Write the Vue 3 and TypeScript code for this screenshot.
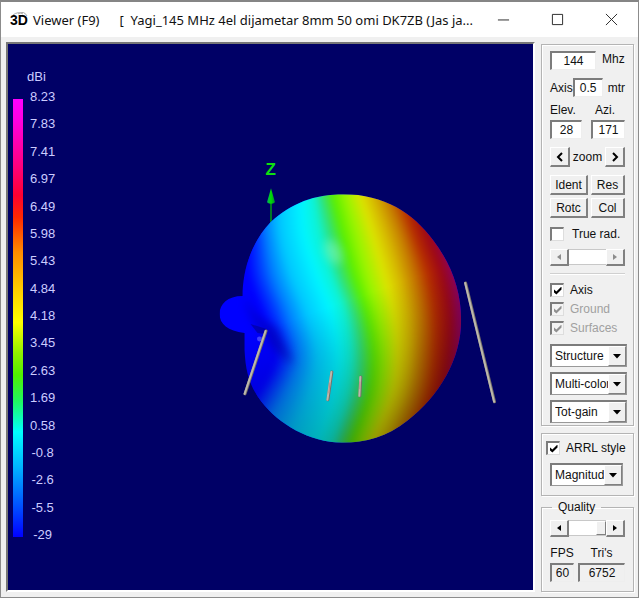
<script setup lang="ts">
import { ref } from 'vue'

type Rgb = [number, number, number]
interface Isoline {
  color: Rgb
  xs: number[]
}

const gains = ['8.23', '7.83', '7.41', '6.97', '6.49', '5.98', '5.43', '4.84', '4.18', '3.45', '2.63', '1.69', '0.58', '-0.8', '-2.6', '-5.5', '-29']

const levels = [195, 235, 275, 315, 355, 395, 442]

// x position of each colour along the levels above
const isolines: Isoline[] = [
  { color: [0, 0, 255], xs: [240, 246, 248, 262, 276, 257, 225] },
  { color: [0, 60, 255], xs: [252, 257, 261, 276, 287, 270, 238] },
  { color: [0, 130, 255], xs: [264, 267, 274, 289, 299, 285, 256] },
  { color: [0, 200, 255], xs: [279, 281, 291, 307, 316, 308, 288] },
  { color: [0, 245, 255], xs: [301, 304, 316, 331, 338, 333, 318] },
  { color: [15, 242, 210], xs: [314, 320, 331, 345, 351, 347, 333] },
  { color: [50, 225, 120], xs: [322, 331, 341, 355, 361, 357, 341] },
  { color: [90, 238, 0], xs: [333, 343, 354, 367, 373, 369, 352] },
  { color: [150, 245, 0], xs: [345, 356, 366, 378, 384, 379, 361] },
  { color: [220, 228, 0], xs: [360, 373, 384, 394, 397, 392, 373] },
  { color: [214, 185, 0], xs: [372, 386, 398, 407, 409, 403, 385] },
  { color: [198, 125, 0], xs: [386, 401, 412, 420, 420, 414, 397] },
  { color: [182, 45, 0], xs: [401, 415, 428, 435, 435, 429, 413] },
  { color: [158, 8, 22], xs: [414, 428, 442, 449, 448, 441, 425] },
  { color: [135, 0, 115], xs: [432, 446, 458, 463, 463, 454, 440] },
]

function mix(a: number, b: number, t: number): number {
  return a + (b - a) * t
}

// Smooth curve through the level points, closed off on the right
function regionPath(xs: number[]): string {
  let d = `M${xs[0]} 175 L${xs[0]} ${levels[0]}`
  for (let i = 0; i < xs.length - 1; i++) {
    const before = Math.max(i - 1, 0)
    const after = Math.min(i + 2, xs.length - 1)
    const c1x = xs[i] + (xs[i + 1] - xs[before]) / 6
    const c2x = xs[i + 1] - (xs[after] - xs[i]) / 6
    const c1y = levels[i] + (levels[i + 1] - levels[before]) / 6
    const c2y = levels[i + 1] - (levels[after] - levels[i]) / 6
    d += ` C${c1x} ${c1y} ${c2x} ${c2y} ${xs[i + 1]} ${levels[i + 1]}`
  }
  return d + ' V460 H490 V175 Z'
}

const steps = 8
const regions: { d: string; fill: string }[] = []
for (let i = 0; i < isolines.length - 1; i++) {
  const a = isolines[i]
  const b = isolines[i + 1]
  for (let s = 0; s < steps; s++) {
    const t = s / steps
    const rgb = a.color.map((c, k) => Math.round(mix(c, b.color[k], t)))
    regions.push({
      d: regionPath(a.xs.map((x, k) => mix(x, b.xs[k], t))),
      fill: `rgb(${rgb.join(',')})`,
    })
  }
}

const lobe =
  'M344 194 C385 194 414 213 434 240 C452 264 462 290 462 320 C462 360 440 396 408 421 C388 437 366 443 343 443 C310 443 279 424 262 402 C250 386 246 372 245 350 L245 333 C228 331 220 324 220 314 C220 304 228 296 243 296 C243 270 252 242 271 222 C292 203 315 194 344 194 Z'

const frequency = ref('144')
const axisLength = ref('0.5')
const elevation = ref('28')
const azimuth = ref('171')
const trueRad = ref(false)
const showAxis = ref(true)
const arrl = ref(true)
const structure = ref('Structure')
const palette = ref('Multi-color')
const gainKind = ref('Tot-gain')
const scale = ref('Magnitude')
const quality = ref(100)
const selects = [
  { label: 'Structure view', model: structure },
  { label: 'Colouring', model: palette },
  { label: 'Gain type', model: gainKind },
]
</script>

<template>
  <main class="window">
    <header class="titlebar">
      <svg class="logo" viewBox="0 0 20 20" aria-hidden="true">
        <path d="M3 5 Q8 1 13 4 M8 4 Q14 0 17 6" fill="none" stroke="#aaa" stroke-width="1" />
        <text x="0" y="15">3D</text>
      </svg>
      <h1 class="title"><span>Viewer (F9)</span><span>[&nbsp; Yagi_145 MHz 4el dijametar 8mm 50 omi DK7ZB (Jas ja...</span></h1>
      <nav class="controls">
        <button type="button" aria-label="Minimize"><svg viewBox="0 0 14 14"><path d="M1 7.500H13" /></svg></button>
        <button type="button" aria-label="Maximize"><svg viewBox="0 0 14 14"><path d="M1.500 1.500H12.500V12.500H1.500Z" /></svg></button>
        <button type="button" aria-label="Close"><svg viewBox="0 0 14 14"><path d="M1 1L13 13M13 1L1 13" /></svg></button>
      </nav>
    </header>

    <div class="body">
      <section class="viewport">
        <svg class="scene" viewBox="8 44 526 546" preserveAspectRatio="xMidYMid meet" role="img" aria-label="Radiation pattern">
          <defs>
            <clipPath id="lobe-clip"><path :d="lobe" /></clipPath>
            <filter id="soft" x="-50%" y="-50%" width="200%" height="200%"><feGaussianBlur stdDeviation="5" /></filter>
            <filter id="blend" x="-10%" y="-10%" width="120%" height="120%" color-interpolation-filters="sRGB"><feGaussianBlur stdDeviation="3" /></filter>
            <linearGradient id="shade" gradientUnits="userSpaceOnUse" x1="305" y1="315" x2="350" y2="445">
              <stop offset="0" stop-color="#000" stop-opacity="0" />
              <stop offset="1" stop-color="#000" stop-opacity="0.3" />
            </linearGradient>
            <linearGradient id="arrow" x1="0" x2="1">
              <stop offset="0" stop-color="#0a6" />
              <stop offset="0.5" stop-color="#0d0" />
              <stop offset="1" stop-color="#083" />
            </linearGradient>
          </defs>
          <text class="axis-name" x="266" y="175">Z</text>
          <path d="M271.500 200V225" stroke="#00a010" stroke-width="1.500" />
          <path d="M271.500 188L275.500 202Q271.500 205 267.500 202Z" fill="url(#arrow)" />
          <g clip-path="url(#lobe-clip)">
            <rect x="215" y="185" width="260" height="265" fill="#0000ff" />
            <g filter="url(#blend)">
              <path v-for="(region, i) in regions" :key="i" :d="region.d" :fill="region.fill" />
            </g>
            <path d="M245 295Q257 322 276 326Q284 345 294 364Q273 352 264 332Q250 322 245 295Z" fill="#0000b0" opacity="0.65" filter="url(#soft)" />
            <ellipse cx="334" cy="252" rx="8" ry="13" fill="#a0ffd0" opacity="0.4" filter="url(#soft)" transform="rotate(-25 334 252)" />
            <rect x="215" y="185" width="260" height="265" fill="url(#shade)" />
            <path d="M251 324L267 329L265 334L258 333Z" fill="#000080" opacity="0.5" />
            <circle cx="260" cy="339" r="2.500" fill="#4040ff" />
          </g>
          <g fill="none" stroke-linecap="round">
            <path d="M266.500 331L245.500 394M466.500 283L495.500 402M332.500 372L328.500 400M361.500 377L360.500 396" stroke="#777068" stroke-width="3" />
            <path d="M266 331L245 394M466 283L495 402M332 372L328 400M361 377L360 396" stroke="#bcb8ac" stroke-width="2" />
            <path d="M330.500 383L329.500 393M360.500 382V389" stroke="#bd8a86" stroke-width="1" />
          </g>
        </svg>
        <div class="legend">
          <span class="unit">dBi</span>
          <div class="scale">
            <div class="bar"></div>
            <ol class="gains">
              <li v-for="gain in gains" :key="gain">{{ gain }}</li>
            </ol>
          </div>
        </div>
      </section>

      <aside class="sidebar">
        <section class="group main">
          <label class="row freq"><input v-model="frequency" class="field f46" type="text" /><span>Mhz</span></label>
          <label class="row axis"><span>Axis</span><input v-model="axisLength" class="field f32" type="text" /><span class="mtr">mtr</span></label>
          <div class="angles">
            <label><span>Elev.</span><input v-model="elevation" class="field" type="text" /></label>
            <label><span>Azi.</span><input v-model="azimuth" class="field" type="text" /></label>
          </div>
          <div class="row zoom">
            <button class="btn square" type="button" aria-label="Zoom out"><svg viewBox="0 0 10 10"><path d="M7 1L3 5L7 9" /></svg></button>
            <span>zoom</span>
            <button class="btn square" type="button" aria-label="Zoom in"><svg viewBox="0 0 10 10"><path d="M3 1L7 5L3 9" /></svg></button>
          </div>
          <div class="actions">
            <button class="btn" type="button">Ident</button>
            <button class="btn" type="button">Res</button>
            <button class="btn" type="button">Rotc</button>
            <button class="btn" type="button">Col</button>
          </div>
          <label class="check rad"><input v-model="trueRad" type="checkbox" />True rad.</label>
          <div class="scroller off">
            <button class="btn" type="button" disabled aria-label="Decrease radius"><i class="tri left"></i></button>
            <input type="range" disabled aria-label="Radius" />
            <button class="btn" type="button" disabled aria-label="Increase radius"><i class="tri right"></i></button>
          </div>
          <hr />
          <div class="checks">
            <label class="check"><input v-model="showAxis" type="checkbox" />Axis</label>
            <label class="check dim"><input type="checkbox" checked disabled />Ground</label>
            <label class="check dim"><input type="checkbox" checked disabled />Surfaces</label>
          </div>
          <div class="selects">
            <div v-for="item in selects" :key="item.label" class="combo">
              <select v-model="item.model.value" :aria-label="item.label"><option>{{ item.model.value }}</option></select>
              <span class="drop"><i class="tri down"></i></span>
            </div>
          </div>
        </section>

        <section class="group style">
          <label class="check"><input v-model="arrl" type="checkbox" />ARRL style</label>
          <div class="combo short">
            <select v-model="scale" aria-label="Scale"><option>Magnitude</option></select>
            <span class="drop"><i class="tri down"></i></span>
          </div>
        </section>

        <fieldset class="group quality">
          <legend>Quality</legend>
          <div class="scroller">
            <button class="btn" type="button" aria-label="Lower quality"><i class="tri left"></i></button>
            <input v-model="quality" type="range" aria-label="Quality" />
            <button class="btn" type="button" aria-label="Higher quality"><i class="tri right"></i></button>
          </div>
          <dl class="stats">
            <div class="fps"><dt>FPS</dt><dd class="field">60</dd></div>
            <div class="tris"><dt>Tri's</dt><dd class="field">6752</dd></div>
          </dl>
        </fieldset>
      </aside>
    </div>
  </main>
</template>

<style>
body {
  background: #f0f0f0;
}
</style>

<style scoped>
* {
  box-sizing: border-box;
}

.window {
  display: flex;
  flex-direction: column;
  min-height: 100vh;
  border: 1px solid #8c8c8c;
  border-top: 2px solid #858585;
  background: #f0f0f0;
  color: #111;
  font: 12px/16px "Liberation Sans", Arial, sans-serif;
}

.titlebar {
  display: flex;
  align-items: center;
  height: 35px;
  padding-left: 9px;
  background: #fff;
}

.logo {
  flex: none;
  width: 20px;
  height: 20px;
}

.logo text {
  font: bold 14px "Liberation Sans", Arial, sans-serif;
}

.title {
  flex: 1;
  display: flex;
  gap: 20px;
  min-width: 0;
  margin: 0 0 0 3px;
  white-space: nowrap;
  font: 13px/20px "Noto Sans", "Open Sans", sans-serif;
}

.controls {
  display: flex;
}

.controls button {
  display: grid;
  place-items: center;
  width: 54px;
  height: 32px;
  padding: 0;
  border: 0;
  background: none;
}

.controls svg {
  width: 13px;
  height: 13px;
  fill: none;
  stroke: #222;
}

.body {
  flex: 1;
  display: flex;
  gap: 6px;
  padding: 5px 4px 5px 5px;
}

.viewport {
  flex: 1;
  display: grid;
  border: 2px solid #777;
  border-right-color: #fff;
  border-bottom-color: #fff;
  background: #000066;
}

.scene,
.legend {
  grid-area: 1 / 1;
}

.scene {
  width: 100%;
  height: 100%;
}

.axis-name {
  fill: #10e010;
  font: bold 17px "Liberation Sans", Arial, sans-serif;
}

.legend {
  align-self: start;
  justify-self: start;
  padding: 25px 0 0 5px;
  color: #ccccff;
  font-size: 13px;
}

.unit {
  display: block;
  margin-left: 14px;
}

.scale {
  display: flex;
  gap: 7px;
  margin-top: 4px;
}

.bar {
  width: 10px;
  height: 438px;
  margin-top: 10px;
  background: linear-gradient(#ff00ff 0%, #ff00e0 5%, #ff0080 15%, #ff0030 22%, #ff2800 27%, #ff8c00 35%, #ffd000 44%, #ffff00 51%, #90f000 58%, #50f000 63%, #20f860 69%, #00ffff 76%, #00b4ff 84%, #0050ff 93%, #0000ff 100%);
}

.gains {
  display: flex;
  flex-direction: column;
  justify-content: space-between;
  height: 454px;
  margin: 0;
  padding: 0;
  list-style: none;
  text-align: center;
}

.sidebar {
  display: flex;
  flex-direction: column;
  width: 93px;
  padding-top: 2px;
}

.group {
  min-width: 0;
  margin: 0;
  border: 1px solid #b4b4b4;
  box-shadow: inset 1px 1px #fff, 1px 1px #fff;
}

.main {
  height: 382px;
  padding: 6px 8px 0;
}

.row {
  display: flex;
  align-items: center;
}

.field {
  min-width: 0;
  height: 19px;
  margin: 0;
  padding: 0 2px;
  border: 2px solid #7c7c7c;
  border-right: 1px solid #eee;
  border-bottom: 1px solid #eee;
  border-radius: 0;
  background: #fff;
  color: #111;
  font: inherit;
  text-align: center;
}

.f46 {
  width: 46px;
}

.f32 {
  width: 32px;
}

.freq {
  gap: 6px;
}

.freq span {
  margin-bottom: 3px;
}

.axis {
  margin-top: 8px;
}

.mtr {
  margin-left: 5px;
}

.angles {
  display: grid;
  grid-template-columns: 32px 34px;
  gap: 9px;
  margin-top: 5px;
}

.angles label {
  display: flex;
  flex-direction: column;
  gap: 2px;
}

.angles label + label span {
  padding-left: 4px;
}

.zoom {
  justify-content: space-between;
  margin-top: 8px;
}

.btn {
  height: 20px;
  padding: 0;
  border: 1px solid #fff;
  border-right: 2px solid #808080;
  border-bottom: 2px solid #808080;
  border-radius: 0;
  background: #f0f0f0;
  color: #111;
  font: inherit;
  line-height: 16px;
}

.square {
  display: grid;
  place-items: center;
  width: 20px;
}

.square svg {
  width: 10px;
  height: 10px;
  fill: none;
  stroke: #000;
  stroke-width: 2;
}

.actions {
  display: grid;
  grid-template-columns: 38px 34px;
  gap: 3px;
  margin-top: 8px;
}

.check {
  display: flex;
  align-items: center;
  gap: 6px;
  height: 18px;
  white-space: nowrap;
}

.check input {
  appearance: none;
  flex: none;
  display: grid;
  place-items: center;
  width: 14px;
  height: 14px;
  margin: 0;
  border: 2px solid #7c7c7c;
  border-right: 1px solid #ddd;
  border-bottom: 1px solid #ddd;
  background: #fff;
}

.check input:checked::after {
  content: "";
  width: 8px;
  height: 8px;
  background: #000;
  clip-path: polygon(0 32%, 36% 62%, 100% 0, 100% 38%, 36% 100%, 0 70%);
}

.check input:disabled {
  background: #f4f4f4;
}

.check input:disabled::after {
  background: #909090;
}

.dim {
  color: #a0a0a0;
}

.rad {
  gap: 8px;
  margin-top: 7px;
}

.scroller {
  display: flex;
  width: 75px;
}

.main .scroller {
  margin-top: 6px;
}

.scroller .btn {
  display: grid;
  place-items: center;
  width: 19px;
  height: 17px;
}

.scroller input {
  appearance: none;
  flex: 1;
  min-width: 0;
  height: 16px;
  margin: 0;
  border-top: 1px solid #c8c8c8;
  border-bottom: 1px solid #c8c8c8;
  background: #fff;
}

.scroller input::-webkit-slider-thumb {
  appearance: none;
  width: 10px;
  height: 14px;
  border: 1px solid #fff;
  border-right: 1px solid #808080;
  border-bottom: 1px solid #808080;
  background: #f0f0f0;
}

.off input::-webkit-slider-thumb {
  visibility: hidden;
}

.tri {
  display: block;
  background: #000;
}

.left {
  width: 4px;
  height: 6px;
  clip-path: polygon(100% 0, 100% 100%, 0 50%);
}

.right {
  width: 4px;
  height: 6px;
  clip-path: polygon(0 0, 100% 50%, 0 100%);
}

.down {
  width: 9px;
  height: 5px;
  clip-path: polygon(0 0, 100% 0, 50% 100%);
}

.off .tri {
  background: #8c8c8c;
}

hr {
  height: 2px;
  margin: 7px 0 0;
  border: 0;
  border-top: 1px solid #d0d0d0;
  border-bottom: 1px solid #fff;
}

.checks {
  margin-top: 6px;
}

.checks .check + .check {
  margin-top: 1px;
}

.selects {
  display: flex;
  flex-direction: column;
  gap: 5px;
  margin-top: 7px;
}

.combo {
  display: grid;
  grid-template-columns: 1fr 18px;
  width: 77px;
  height: 23px;
  border: 2px solid #7c7c7c;
  border-right: 1px solid #999;
  border-bottom: 1px solid #999;
  background: #fff;
}

.short {
  width: 73px;
}

.combo select {
  grid-area: 1 / 1 / 2 / 3;
  appearance: none;
  min-width: 0;
  padding: 0 18px 0 3px;
  border: 0;
  border-radius: 0;
  background: transparent;
  color: #111;
  font: inherit;
  text-overflow: clip;
}

.drop {
  grid-area: 1 / 2;
  display: grid;
  place-items: center;
  border: 1px solid #fff;
  border-right: 1px solid #808080;
  border-bottom: 1px solid #808080;
  background: #f0f0f0;
  pointer-events: none;
}

.style {
  height: 63px;
  margin-top: 7px;
  padding: 5px 0 0 4px;
}

.style .combo {
  margin: 6px 0 0 4px;
}

.quality {
  height: 93px;
  margin-top: 3px;
  padding: 5px 0 0 8px;
}

.quality legend {
  margin-left: 2px;
  padding: 0 6px;
}

.stats {
  display: flex;
  gap: 4px;
  margin: 8px 0 0;
}

.stats div {
  display: flex;
  flex-direction: column;
  gap: 2px;
}

.stats dt {
  text-align: center;
}

.stats .field {
  background: #f0f0f0;
}

.fps {
  width: 24px;
}

.tris {
  width: 47px;
}
</style>
